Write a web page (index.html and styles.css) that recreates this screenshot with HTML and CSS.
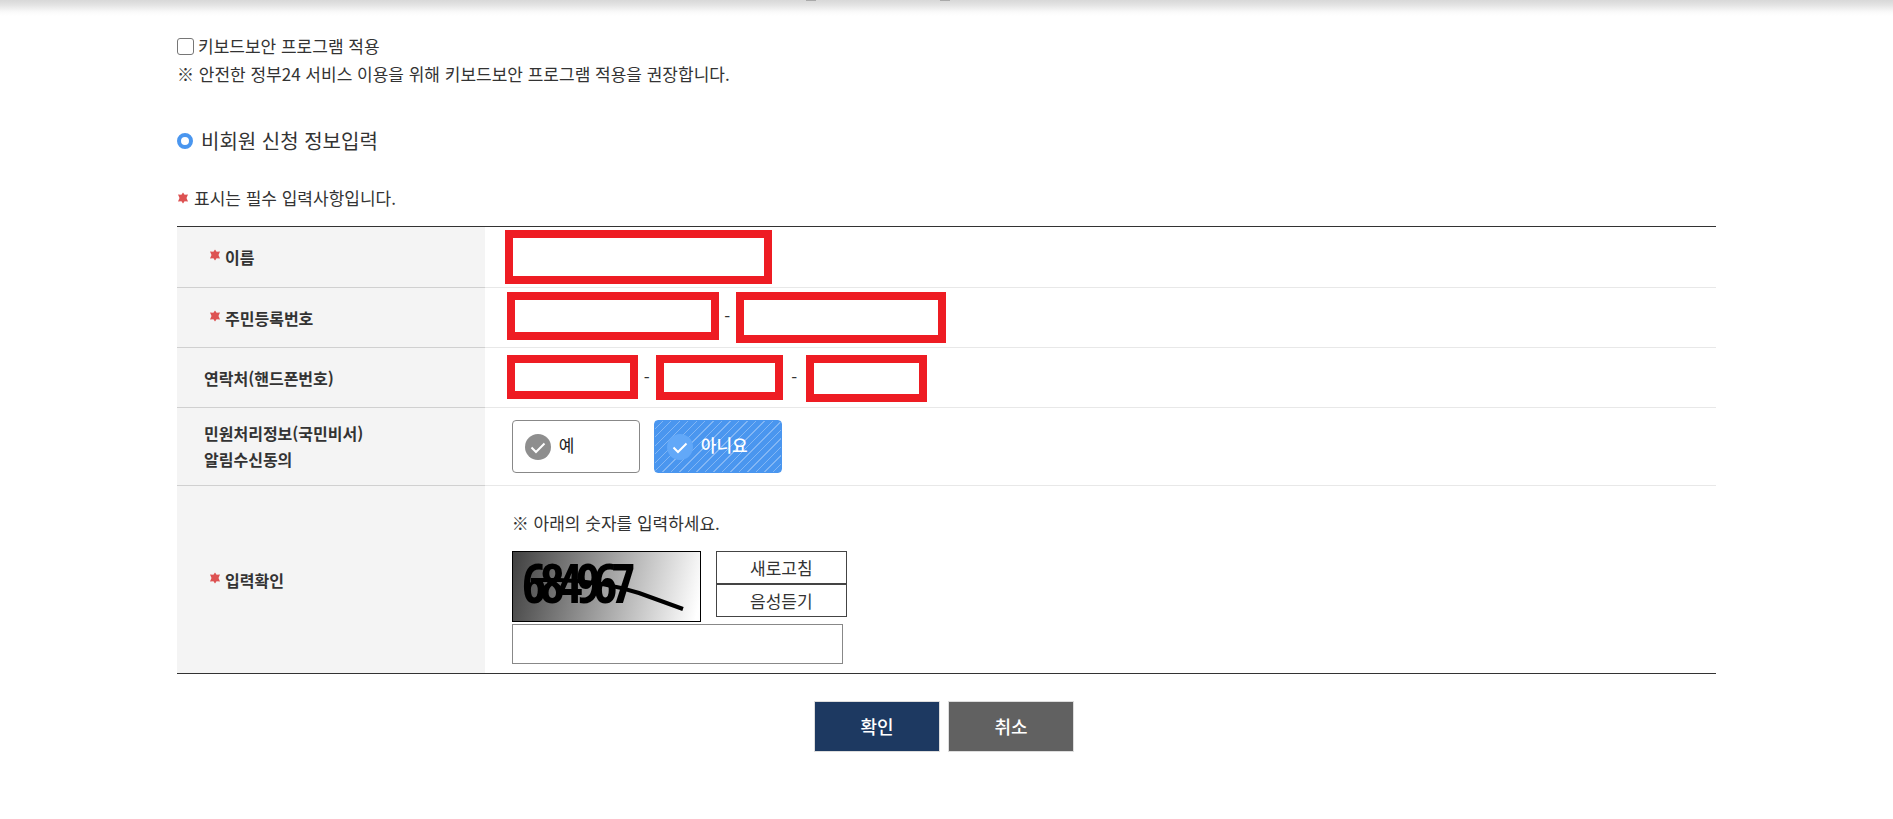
FILE: index.html
```html
<!DOCTYPE html>
<html lang="ko">
<head>
<meta charset="utf-8">
<meta name="viewport" content="width=device-width, initial-scale=1">
<title>비회원 신청 정보입력</title>
<link rel="stylesheet" href="styles.css">
</head>
<body>
<svg class="sprite" aria-hidden="true">
  <symbol id="star" viewBox="0 0 12 12">
    <path d="M6 0.500L7.600 2.800 11 2.600 9.500 6 11 9.400 7.600 9.200 6 11.500 4.400 9.200 1 9.400 2.500 6 1 2.600 4.400 2.800z" fill="#dd5252"/>
  </symbol>
  <symbol id="check" viewBox="0 0 26 26">
    <circle cx="13" cy="13" r="13" fill="currentColor"/>
    <path d="M6.500 13.500l4.500 4.500 8.500-8.500" stroke="#fff" stroke-width="2" fill="none"/>
  </symbol>
</svg>
<div class="header-shadow"><span class="nub"></span><span class="nub"></span></div>
<main class="page">
  <form>
    <div class="security">
      <label class="security-label"><input type="checkbox" class="security-box">키보드보안 프로그램 적용</label>
      <p class="security-note">※ 안전한 정부24 서비스 이용을 위해 키보드보안 프로그램 적용을 권장합니다.</p>
    </div>
    <h2 class="title"><span class="ring"></span>비회원 신청 정보입력</h2>
    <p class="required-note"><svg class="star"><use href="#star"/></svg>표시는 필수 입력사항입니다.</p>
    <table class="form-table">
      <tbody>
        <tr class="row row-name">
          <th scope="row"><label class="name required" for="name"><svg class="star"><use href="#star"/></svg>이름</label></th>
          <td class="cell-name"><input class="field field-name" id="name" type="text"></td>
        </tr>
        <tr class="row">
          <th scope="row"><label class="name required" for="id1"><svg class="star"><use href="#star"/></svg>주민등록번호</label></th>
          <td class="cell-id"><div class="fields">
            <input class="field field-id1" id="id1" type="text"><span class="dash dash-id">-</span><input class="field field-id2" type="password" aria-label="주민등록번호 뒷자리">
          </div></td>
        </tr>
        <tr class="row">
          <th scope="row"><label for="tel1">연락처(핸드폰번호)</label></th>
          <td class="cell-tel"><div class="fields">
            <input class="field field-tel1" id="tel1" type="text"><span class="dash">-</span><input class="field field-tel2" type="text" aria-label="연락처 가운데 자리"><span class="dash dash-wide">-</span><input class="field field-tel3" type="text" aria-label="연락처 끝자리">
          </div></td>
        </tr>
        <tr class="row row-choice">
          <th scope="row">민원처리정보(국민비서)<br>알림수신동의</th>
          <td><div class="choices">
            <label class="choice"><input type="radio" name="agree" class="choice-input"><svg class="check"><use href="#check"/></svg>예</label>
            <label class="choice choice-on"><input type="radio" name="agree" class="choice-input" checked><svg class="check"><use href="#check"/></svg>아니요</label>
          </div></td>
        </tr>
        <tr class="row row-captcha">
          <th scope="row"><label class="name required" for="captcha"><svg class="star"><use href="#star"/></svg>입력확인</label></th>
          <td>
            <p class="captcha-note">※ 아래의 숫자를 입력하세요.</p>
            <div class="captcha">
              <svg class="captcha-image" viewBox="0 0 187 69" role="img" aria-label="684967">
                <defs><linearGradient id="shade" gradientUnits="userSpaceOnUse" x1="0" y1="0" x2="188" y2="44"><stop offset="0" stop-color="#404040"/><stop offset="1" stop-color="#fff"/></linearGradient></defs>
                <rect width="187" height="69" fill="url(#shade)"/>
                <text class="captcha-digits" x="9 27 45 63 80 98" y="51">684967</text>
                <path d="M18 28h28q42 1 80 13l44 16" stroke="#000" stroke-width="4" fill="none"/>
              </svg>
              <div class="captcha-actions">
                <button type="button" class="small-button">새로고침</button>
                <button type="button" class="small-button">음성듣기</button>
              </div>
            </div>
            <input class="captcha-input" id="captcha" type="text">
          </td>
        </tr>
      </tbody>
    </table>
    <div class="actions">
      <button type="submit" class="button button-ok">확인</button>
      <button type="button" class="button button-cancel">취소</button>
    </div>
  </form>
</main>
</body>
</html>
```
FILE: styles.css
```css
* { box-sizing: border-box; }
body {
  margin: 0;
  background: #fff;
  color: #333;
  font: 17px/28px "Noto Sans CJK KR", "Noto Sans", sans-serif;
}
p, h2 { margin: 0; }
input, button { font: inherit; color: inherit; border-radius: 0; }
.sprite { position: absolute; width: 0; height: 0; }
.header-shadow {
  display: flex;
  justify-content: center;
  gap: 124px;
  height: 16px;
  padding-right: 138px;
  background: linear-gradient(#d8d8d8, #e3e3e3 30%, #fafafa 75%, #fff);
}
.nub { width: 10px; height: 1px; background: #aaa; }
.page { max-width: 1539px; margin: 0 auto; padding: 16px 0 67px; }
.security-label { display: flex; align-items: center; gap: 4px; }
.security-box {
  appearance: none;
  width: 17px;
  height: 17px;
  margin: 0;
  border: 1px solid #767676;
  border-radius: 3px;
  background: #fff;
}
.security-box:checked { background: #4a96ef; }
.title {
  display: flex;
  align-items: center;
  gap: 8px;
  margin-top: 37px;
  font-size: 20px;
  font-weight: 400;
  line-height: 32px;
}
.ring { width: 16px; height: 16px; border: 4px solid #4a96ef; border-radius: 50%; }
.required-note { display: flex; align-items: center; gap: 5px; margin-top: 27px; }
.star { flex: none; width: 12px; height: 12px; }
.form-table {
  width: 100%;
  margin-top: 14px;
  border-collapse: separate;
  border-spacing: 0;
  border-top: 1px solid #333;
  border-bottom: 1px solid #333;
  table-layout: fixed;
}
th, td { height: 60px; border-bottom: 1px solid #e8e8e8; }
th {
  width: 20%;
  padding: 0 10px 0 27px;
  border-color: #d0d0d0;
  background: #f4f4f4;
  font-size: 16px;
  font-weight: 700;
  line-height: 26px;
  text-align: left;
}
td { padding: 0 27px; vertical-align: top; }
.row-name th, .row-name td { height: 61px; }
.name { display: flex; align-items: center; gap: 4px; padding-left: 5px; }
.name .star { margin-bottom: 4px; }
.cell-name { padding: 3px 20px 0; }
.cell-id { padding: 4px 22px 0; }
.cell-tel { padding: 7px 22px 0; }
.fields { display: flex; align-items: flex-start; }
.field {
  display: block;
  padding: 0 8px;
  border: 8px solid #ee1c23;
  background: #fff;
}
.field-name { width: 267px; height: 54px; }
.field-id1 { width: 212px; height: 48px; }
.field-id2 { width: 210px; height: 51px; }
.field-tel1 { width: 131px; height: 44px; }
.field-tel2 { width: 127px; height: 45px; }
.field-tel3 { width: 121px; height: 47px; }
.dash { width: 18px; line-height: 44px; text-align: center; }
.dash-id { width: 17px; line-height: 48px; }
.dash-wide { width: 23px; }
.row-choice th, .row-choice td { height: 78px; }
.row-choice th { padding-bottom: 2px; }
.choices { display: flex; gap: 14px; padding-top: 12px; }
.choice {
  position: relative;
  display: flex;
  align-items: center;
  gap: 8px;
  width: 128px;
  height: 53px;
  padding: 0 12px 4px;
  border: 1px solid #888;
  border-radius: 4px;
  color: #222;
}
.choice-on {
  border-color: #4a96ef;
  background: repeating-linear-gradient(135deg, #4a96ef 0, #4a96ef 5px, #82b6f4 5px, #82b6f4 6px);
  color: #fff;
  font-weight: 500;
}
.choice-input { position: absolute; inset: 0; width: 100%; height: 100%; margin: 0; opacity: 0; }
.check { flex: none; width: 26px; height: 26px; margin-top: 4px; color: #8e8e8e; }
.choice-on .check { color: #62a8f8; }
.row-captcha th, .row-captcha td { height: 187px; border-bottom: 0; }
.captcha-note { padding-top: 23px; }
.captcha { display: flex; align-items: flex-start; gap: 15px; margin-top: 14px; }
.captcha-image { width: 189px; height: 71px; border: 1px solid #000; overflow: visible; }
.captcha-digits { font: 700 53px "Open Sans Condensed", "Noto Sans CJK KR", sans-serif; }
.captcha-actions { display: flex; flex-direction: column; width: 131px; }
.small-button {
  height: 33px;
  padding: 0;
  border: 1px solid #444;
  background: #fff;
}
.captcha-input {
  display: block;
  width: 331px;
  height: 40px;
  margin: 2px 0 9px;
  padding: 0 10px;
  border: 1px solid #888;
}
.actions { display: flex; justify-content: center; gap: 8px; margin-top: 27px; padding-right: 5px; }
.button {
  width: 126px;
  height: 51px;
  padding: 0 0 2px;
  border: 1px solid #ddd;
  color: #fff;
  font-size: 18px;
  font-weight: 500;
}
.button-ok { background: #1d3961; }
.button-cancel { background: #616161; }
```
